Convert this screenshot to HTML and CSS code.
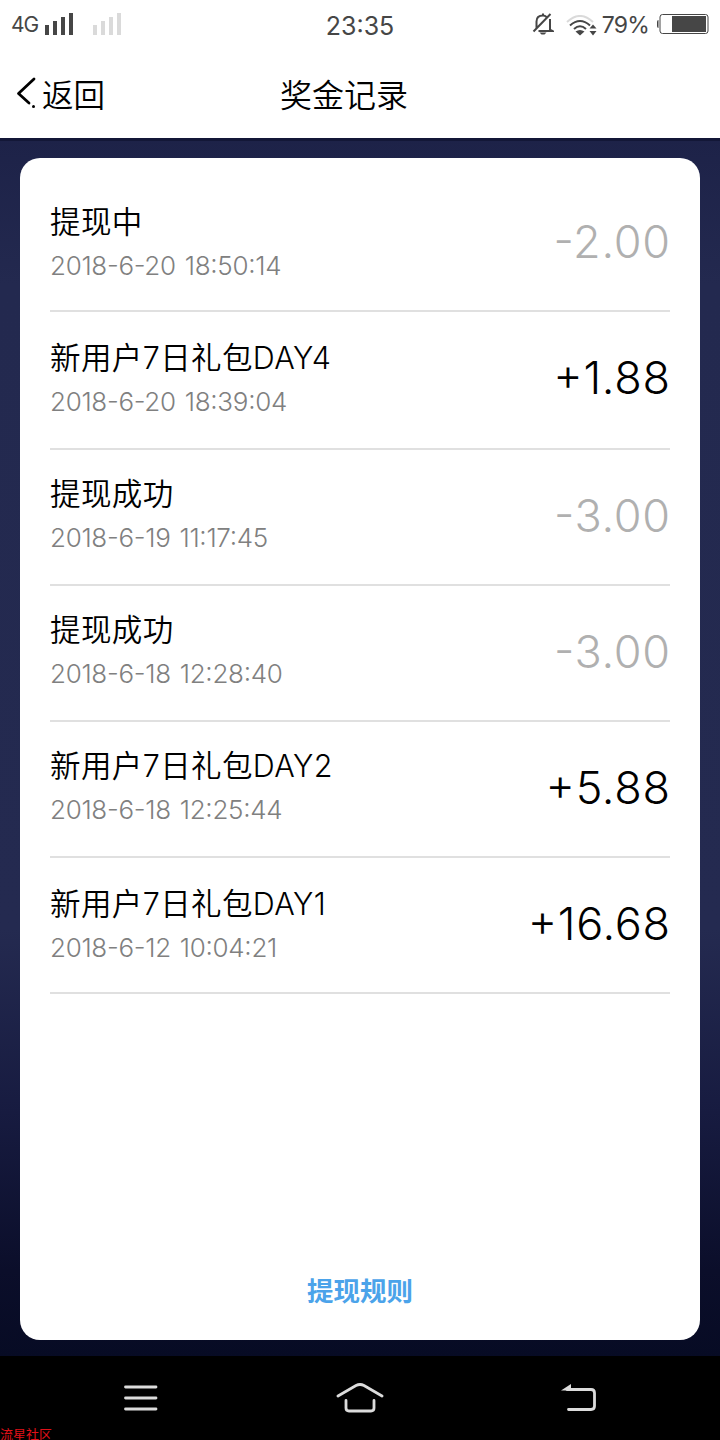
FILE: index.html
```
<!DOCTYPE html>
<html lang="zh-CN">
<head>
  <meta charset="UTF-8">
  <meta name="viewport" content="width=device-width, initial-scale=1.0">
  <title>奖金记录</title>
  <link rel="stylesheet" href="styles.css">
</head>
<body>
  <div class="status-bar">
    <div class="status-left">
      <span class="network">4G</span>
      <svg class="signal" width="28" height="22" viewBox="0 0 28 22" fill="#464646">
        <path d="M0 12h4v10H0zM8 8h4v14H8zM16 4h4v18h-4zM24 0h4v22h-4z"/>
      </svg>
      <svg class="signal signal-off" width="28" height="22" viewBox="0 0 28 22" fill="#dadada">
        <path d="M0 12h4v10H0zM8 8h4v14H8zM16 4h4v18h-4zM24 0h4v22h-4z"/>
      </svg>
    </div>
    <div class="clock">23:35</div>
    <div class="status-right">
      <svg class="bell" width="22" height="24" viewBox="0 0 22 24" fill="none" stroke="#464646" stroke-width="2">
        <path d="M4.500 16V9.500Q4.500 3.500 11 3.500Q13 3.500 14.500 5M18 7V17.500L20.500 19H6.500M11 1.500V3.500M1.500 19.500L18.500 2"/>
        <path d="M7.500 20.500h7l-2 2h-3z" fill="#464646" stroke="none"/>
      </svg>
      <svg class="wifi" width="32" height="22" viewBox="0 0 32 22" fill="none" stroke-width="2">
        <path d="M1 7Q14-5 27 7" stroke="#dadada"/>
        <path d="M4 10.500Q14 1.500 24 10.500M8 14Q14 8.500 20 14" stroke="#464646"/>
        <path d="M9.500 16.500Q14 13.500 18.500 16.500L14 20.500zM27 9.500l3.500 4h-7zM23.500 16h7L27 20.500z" fill="#464646"/>
      </svg>
      <span class="percent">79%</span>
      <svg class="battery" width="53" height="22" viewBox="0 0 53 22">
        <path d="M2.500 7Q1 7 1 9v4q0 2 1.500 2z" fill="#464646"/>
        <rect x="4" y="1.500" width="48" height="19" rx="2.500" fill="none" stroke="#464646"/>
        <path d="M16 3h34v16H16z" fill="#464646"/>
      </svg>
    </div>
  </div>

  <header>
    <a class="back-link" href="#">
      <svg width="22" height="32" viewBox="0 0 22 32" fill="none" stroke="#000" stroke-width="2.800" stroke-linecap="round" stroke-linejoin="round">
        <path d="M18 2L2.500 16.500L13 26"/>
        <circle cx="17.500" cy="29.500" r="1.500" fill="#000" stroke="none"/>
      </svg>
      <span>返回</span>
    </a>
    <h1>奖金记录</h1>
  </header>

  <main>
    <div class="card">
      <ul class="records">
        <li class="record first">
          <div class="info">
            <div class="title">提现中</div>
            <div class="time">2018-6-20 18:50:14</div>
          </div>
          <div class="amount out">-2.00</div>
        </li>
        <li class="record tall">
          <div class="info">
            <div class="title">新用户7日礼包DAY4</div>
            <div class="time">2018-6-20 18:39:04</div>
          </div>
          <div class="amount">+1.88</div>
        </li>
        <li class="record">
          <div class="info">
            <div class="title">提现成功</div>
            <div class="time">2018-6-19 11:17:45</div>
          </div>
          <div class="amount out">-3.00</div>
        </li>
        <li class="record">
          <div class="info">
            <div class="title">提现成功</div>
            <div class="time">2018-6-18 12:28:40</div>
          </div>
          <div class="amount out">-3.00</div>
        </li>
        <li class="record">
          <div class="info">
            <div class="title">新用户7日礼包DAY2</div>
            <div class="time">2018-6-18 12:25:44</div>
          </div>
          <div class="amount">+5.88</div>
        </li>
        <li class="record last">
          <div class="info">
            <div class="title">新用户7日礼包DAY1</div>
            <div class="time">2018-6-12 10:04:21</div>
          </div>
          <div class="amount">+16.68</div>
        </li>
      </ul>
      <a class="rules" href="#">提现规则</a>
    </div>
  </main>

  <nav>
    <svg width="34" height="28" viewBox="0 0 34 28" fill="none" stroke="#dcdcdc" stroke-width="2.800" stroke-linecap="round">
      <path d="M1.500 3h30.500M1.500 14h30.500M1.500 25h30.500"/>
    </svg>
    <svg width="48" height="32" viewBox="0 0 48 32" fill="none" stroke="#dcdcdc" stroke-width="2.800" stroke-linecap="round">
      <path d="M2 14L20 3.500Q24 1.500 28 3.500L46 14M10 18.500V26q0 3 3 3h22q3 0 3-3v-7.500"/>
    </svg>
    <svg width="36" height="30" viewBox="0 0 36 30" fill="none" stroke="#dcdcdc" stroke-width="2.800" stroke-linecap="round">
      <path d="M6 6.500h24q3.500 0 3.500 3.500v13q0 3.500-3.500 3.500H7.500"/>
      <path d="M0 7.500L10 1v6.500z" fill="#dcdcdc" stroke="none"/>
    </svg>
    <span class="watermark">流星社区</span>
  </nav>
</body>
</html>
```

FILE: styles.css
```
* {
  box-sizing: border-box;
}
body {
  margin: 0;
  height: 1440px;
  display: flex;
  flex-direction: column;
  overflow: hidden;
  background: #fff;
  color: #000;
  font-family: Inter, 'Noto Sans CJK SC', sans-serif;
}
a {
  color: inherit;
  text-decoration: none;
}
svg {
  display: block;
  flex: none;
}
.status-bar {
  height: 50px;
  padding: 0 11px 2px;
  display: grid;
  grid-template-columns: 1fr auto 1fr;
  align-items: center;
  color: #464646;
}
.status-left, .status-right {
  display: flex;
  align-items: center;
}
.status-right {
  justify-content: flex-end;
}
.network {
  width: 34px;
  padding-top: 1px;
  font-size: 21px;
  letter-spacing: -1px;
}
.signal-off {
  margin-left: 20px;
}
.clock {
  padding-top: 4px;
  font-size: 25px;
}
.wifi {
  margin: 3px 4px 0 12px;
}
.percent {
  margin-right: 7px;
  padding-top: 2px;
  font-size: 23px;
  letter-spacing: -0.8px;
}
header {
  height: 88px;
  padding: 0 16px 3px;
  display: grid;
  grid-template-columns: 264px auto 1fr;
  align-items: center;
}
.back-link {
  display: flex;
  align-items: center;
  gap: 4px;
  font-size: 31.5px;
  font-weight: 350;
}
header h1 {
  margin: 0;
  font-size: 32px;
  font-weight: 350;
}
main {
  height: 1218px;
  padding: 20px 20px 16px;
  background: linear-gradient(#131737 3px, transparent 3px), linear-gradient(#1d2248 0, #23294f 12%, #242a50 65%, #171b40 80%, #0b0e2a 93%, #070b24 100%);
}
.card {
  height: 100%;
  padding: 0 30px 28px;
  display: flex;
  flex-direction: column;
  justify-content: space-between;
  background: #fff;
  border-radius: 20px;
}
.records {
  margin: 0;
  padding: 0;
  list-style: none;
}
.record {
  height: 136px;
  padding-top: 22px;
  display: flex;
  justify-content: space-between;
  border-bottom: 2px solid #e0e0e0;
}
.record.first {
  height: 154px;
  padding-top: 42px;
}
.record.tall {
  height: 138px;
  padding-top: 24px;
}
.record.last {
  padding-top: 24px;
}
.title {
  font-size: 30.5px;
  line-height: 44px;
  font-weight: 350;
  letter-spacing: 0.4px;
}
.time {
  font-size: 26px;
  line-height: 44px;
  font-weight: 300;
  letter-spacing: -0.3px;
  word-spacing: 2px;
  font-feature-settings: "case";
  color: #808080;
}
.amount {
  margin-right: -0.7px;
  font-size: 45px;
  line-height: 87px;
  font-weight: 300;
  letter-spacing: 0.7px;
  font-feature-settings: "case";
}
.first .amount, .tall .amount, .last .amount {
  line-height: 84px;
}
.amount.out {
  color: #b0b0b0;
}
.rules {
  align-self: center;
  font-size: 26.5px;
  line-height: 42px;
  font-weight: 700;
  color: #4ba3ea;
}
nav {
  position: relative;
  height: 84px;
  padding: 0 123px 0 124px;
  display: flex;
  justify-content: space-between;
  align-items: center;
  background: #000;
}
.watermark {
  position: absolute;
  left: 0;
  bottom: -3px;
  font-size: 13px;
  line-height: 18px;
  color: #e01018;
}
```
